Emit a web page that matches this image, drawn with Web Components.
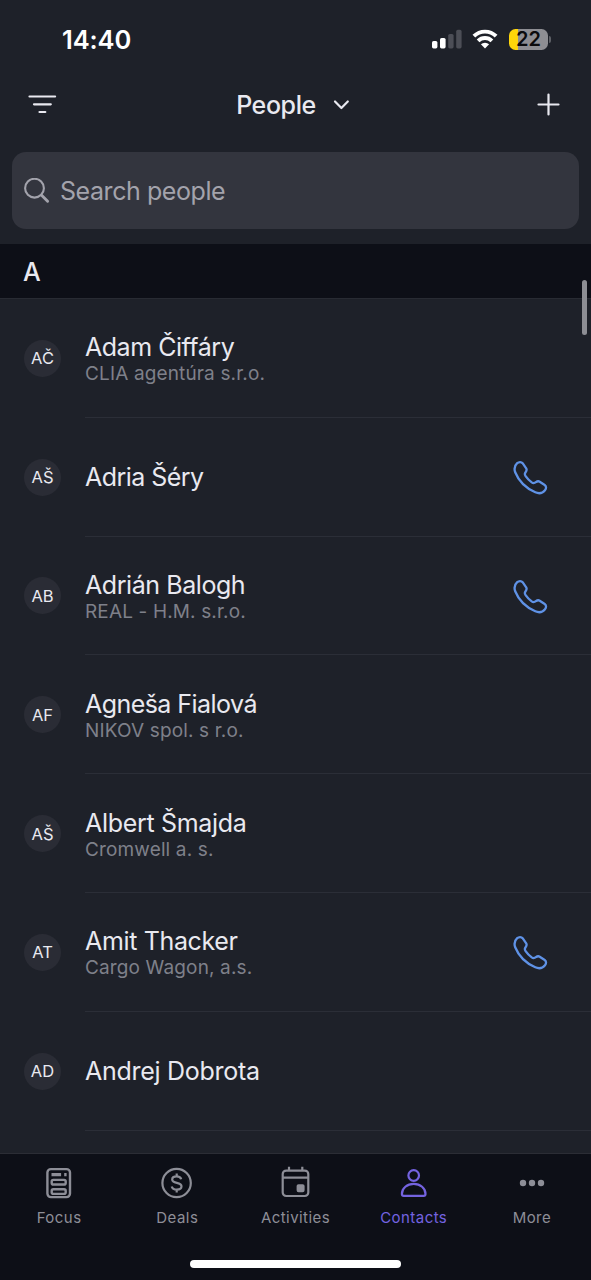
<!DOCTYPE html>
<html lang="en">
<head>
<meta charset="UTF-8">
<meta name="viewport" content="width=device-width, initial-scale=1">
<title>People</title>
<style>
  html, body {
    margin: 0;
    height: 100%;
    overflow: hidden;
    background: #1e2129;
  }

  body {
    font-family: Inter, "Liberation Sans", sans-serif;
    color: #e9e9f0;
  }
</style>
</head>
<body>
<people-screen></people-screen>

<script>
// Base class: opens the shadow root and paints it once connected
class BaseElement extends HTMLElement {
  constructor() {
    super()
    this.attachShadow({ mode: 'open' })
  }

  connectedCallback() {
    this.shadowRoot.innerHTML = this.render()
  }
}

class StatusBar extends BaseElement {
  render() {
    return `
    <style>
      :host {
        display: flex;
        justify-content: space-between;
        align-items: center;
        height: 80px;
        padding: 0 40px 2px 62px;
        box-sizing: border-box;
        color: #fff;
      }
      time { font-size: 25.5px; font-weight: 600; letter-spacing: -0.1px; }
      .icons { display: flex; align-items: center; }
      .wifi { margin: 0 11px 0 10px; }
      .battery {
        display: flex;
        align-items: center;
        justify-content: center;
        width: 39px;
        height: 21px;
        border-radius: 6.5px;
        background: linear-gradient(90deg, #ffd60a 9.5px, #8e8e93 9.5px);
        color: #0b0b0d;
        font-size: 20px;
        font-weight: 600;
      }
      .cap { width: 2px; height: 7px; margin-left: 1px; border-radius: 0 2px 2px 0; background: #5e6066; }
      svg { display: block; }
    </style>
    <time>14:40</time>
    <div class="icons">
      <svg width="30" height="20" viewBox="0 0 30 20">
        <rect x="0" y="12" width="5.4" height="7.4" rx="1.6" fill="#fff"/>
        <rect x="8" y="9" width="5.6" height="10.4" rx="1.6" fill="#fff"/>
        <rect x="16.2" y="5" width="5.4" height="14.4" rx="1.6" fill="#4c4e56"/>
        <rect x="24.2" y="0.8" width="5.4" height="18.6" rx="1.6" fill="#4c4e56"/>
      </svg>
      <svg class="wifi" width="26" height="20" viewBox="0 0 26 20" fill="none" stroke="#fff" stroke-width="3.9">
        <path d="M1.9 7.200a15.700 15.700 0 0 1 22.2 0"/>
        <path d="M6.100 11.800a9.800 9.800 0 0 1 13.800 0"/>
        <path d="M13 19.500l-4.100-4.200a5.900 5.900 0 0 1 8.200 0z" fill="#fff" stroke="none"/>
      </svg>
      <div class="battery">22</div>
      <div class="cap"></div>
    </div>`
  }
}
customElements.define('status-bar', StatusBar)

class NavBar extends BaseElement {
  render() {
    return `
    <style>
      :host {
        display: grid;
        grid-template-columns: 1fr auto 1fr;
        align-items: center;
        height: 50px;
        padding: 0 31px 0 28px;
        box-sizing: border-box;
      }
      h1 {
        display: flex;
        align-items: center;
        gap: 17px;
        margin: 0;
        padding-right: 2px;
        font-size: 25px;
        font-weight: 500;
        line-height: 30px;
        letter-spacing: -0.4px;
      }
      svg { display: block; fill: none; stroke: #e9e9f0; stroke-width: 2.2; stroke-linecap: round; stroke-linejoin: round; }
      .add { justify-self: end; }
    </style>
    <svg width="29" height="20" viewBox="0 0 29 20"><path d="M1.500 1.500h25.600M6 9.300h16.800M11.500 17h5.800"/></svg>
    <h1><slot></slot>
      <svg width="17" height="12" viewBox="0 0 17 12"><path d="M2 2.500l6.400 6.500 6.400-6.500"/></svg>
    </h1>
    <svg class="add" width="23" height="25" viewBox="0 0 23 25"><path d="M11.500 1.500v20M1.500 11.500h20"/></svg>`
  }
}
customElements.define('nav-bar', NavBar)

class SearchField extends BaseElement {
  render() {
    return `
    <style>
      :host {
        display: flex;
        align-items: center;
        gap: 10px;
        height: 77px;
        margin: 22px 12px 15px;
        padding: 0 12px;
        box-sizing: border-box;
        border-radius: 14px;
        background: #33353e;
        color: #a3a3ac;
        font-size: 25px;
        letter-spacing: -0.43px;
      }
      svg { flex: none; fill: none; stroke: #a3a3ac; stroke-linecap: round; }
    </style>
    <svg width="26" height="26" viewBox="0 0 26 26">
      <circle cx="10.5" cy="10.2" r="9.4" stroke-width="2.100"/>
      <path d="M17.600 17.300l6 6" stroke-width="2.900"/>
    </svg>
    <span><slot></slot></span>`
  }
}
customElements.define('search-field', SearchField)

class SectionHeader extends BaseElement {
  render() {
    return `
    <style>
      :host {
        display: flex;
        align-items: center;
        height: 55px;
        padding: 2px 0 0 23px;
        box-sizing: border-box;
        background: #0d0f17;
        border-bottom: 1px solid #282b33;
        font-size: 25px;
        font-weight: 500;
      }
    </style>
    <slot></slot>`
  }
}
customElements.define('section-header', SectionHeader)

class ContactRow extends BaseElement {
  render() {
    const initials = this.getAttribute('initials') ?? ''
    const company = this.getAttribute('company')
    const spacing = this.getAttribute('spacing') ?? '-0.4'
    const phone = this.hasAttribute('phone')

    return `
    <style>
      :host { display: flex; align-items: stretch; height: 118.8px; padding-left: 24px; flex: none; }
      .avatar {
        align-self: center;
        display: flex;
        align-items: center;
        justify-content: center;
        width: 37px;
        height: 37px;
        border-radius: 50%;
        background: #2a2c35;
        font-size: 16.5px;
      }
      .body {
        flex: 1;
        display: flex;
        align-items: center;
        justify-content: space-between;
        margin-left: 24px;
        padding-right: 43px;
        border-bottom: 1px solid #2b2e37;
      }
      .name { font-size: 25px; line-height: 30px; letter-spacing: ${spacing}px; }
      .company { font-size: 19px; line-height: 24px; color: #7e808a; letter-spacing: 0.14px; }
      .name:not(:only-child) { padding-top: 3px; }
      svg { margin-top: 2px; fill: none; stroke: #5f92e6; stroke-width: 2.3; stroke-linejoin: round; }
    </style>
    <div class="avatar">${initials}</div>
    <div class="body">
      <div>
        <div class="name"><slot></slot></div>
        ${company ? `<div class="company">${company}</div>` : ''}
      </div>
      ${phone ? `
      <svg width="35" height="35" viewBox="0 0 35 35">
        <path d="M4.2 3.2C5.8 1.8 8.3 1.500 9.600 3.200L13.200 8.400C14.200 10 13.600 10.900 12.600 12.200C11.400 13.700 11.500 14.600 12.600 16.200C14.200 18.500 16.400 20.700 18.700 22.400C20.300 23.500 21.300 23.400 22.900 22.200C24.200 21.200 25.200 20.800 26.700 21.700L31.700 25C33.500 26.200 33.400 28.500 32 30.200C29.600 33.200 26.200 34 22.300 32.300C12.800 28.200 5.600 20.800 2.200 12.300C0.9 8.600 1.400 5.700 4.200 3.200Z"/>
      </svg>` : ''}
    </div>`
  }
}
customElements.define('contact-row', ContactRow)

const TAB_ICONS = {
  focus: `
    <rect x="5.4" y="3.1" width="22.6" height="28" rx="3.5" stroke-width="2.4"/>
    <path d="M9.500 8.600h9.600M22.200 8.600h2.400" stroke-width="3.2"/>
    <rect x="9.700" y="13.900" width="14" height="4.600" rx="1.6" stroke-width="2.4"/>
    <rect x="9.700" y="23.300" width="14" height="4.600" rx="1.6" stroke-width="2.4"/>`,
  deals: `
    <circle cx="16.6" cy="17" r="14.2"/>
    <path d="M21.200 13.200c-.5-1.800-2.200-2.800-4.600-2.800-2.600 0-4.400 1.100-4.400 3.100 0 4.600 9.300 2.100 9.300 6.800 0 2.100-2 3.300-4.700 3.300-2.600 0-4.500-1.100-5.100-3.100M16.700 7.500v3M16.700 23.500v3"/>`,
  activities: `
    <rect x="3.700" y="4.600" width="25.600" height="25.400" rx="3.5"/>
    <path d="M3.700 11.700h25.600M10 .8v4M23.300 .8v4"/>
    <rect x="18.700" y="19.300" width="5.800" height="5.800" rx=".8" fill="currentColor"/>`,
  contacts: `
    <circle cx="16.700" cy="9.500" r="5.300"/>
    <path d="M4.900 27.900c0-5.700 5.200-10 11.800-10s11.800 4.300 11.800 10c0 1.300-.6 1.900-1.800 1.900h-20c-1.200 0-1.800-.6-1.800-1.900z"/>`,
  more: `
    <g fill="currentColor" stroke="none">
      <circle cx="8" cy="17" r="3.2"/><circle cx="17" cy="17" r="3.2"/><circle cx="26" cy="17" r="3.2"/>
    </g>`
}

class TabItem extends BaseElement {
  render() {
    return `
    <style>
      :host {
        flex: 1;
        display: flex;
        flex-direction: column;
        align-items: center;
        gap: 8px;
        color: #8d8e97;
        font-size: 15px;
        line-height: 20px;
        letter-spacing: 0.45px;
      }
      :host([active]) { color: #7463e0; }
      svg { display: block; fill: none; stroke: currentColor; stroke-width: 2.2; overflow: visible; }
    </style>
    <svg width="34" height="34" viewBox="0 0 34 34">${TAB_ICONS[this.getAttribute('icon')]}</svg>
    <span><slot></slot></span>`
  }
}
customElements.define('tab-item', TabItem)

class TabBar extends BaseElement {
  render() {
    return `
    <style>
      :host {
        display: flex;
        flex-direction: column;
        justify-content: space-between;
        align-items: center;
        height: 127px;
        padding: 12px 0;
        box-sizing: border-box;
        background: #0d0f17;
        border-top: 1px solid #2b2d35;
      }
      nav { display: flex; width: 100%; }
      .home { width: 211px; height: 8px; border-radius: 4px; background: #fff; }
    </style>
    <nav><slot></slot></nav>
    <div class="home"></div>`
  }
}
customElements.define('tab-bar', TabBar)

class PeopleScreen extends BaseElement {
  render() {
    return `
    <style>
      :host { display: flex; flex-direction: column; width: 591px; height: 1280px; overflow: hidden; }
      main { flex: 1; min-height: 0; position: relative; }
      .list { height: 100%; overflow: hidden; }
      /* the scroll thumb floats over the list */
      .thumb {
        position: absolute;
        top: 36px;
        right: 4px;
        width: 5px;
        height: 55px;
        border-radius: 3px;
        background: #8d8e94;
      }
    </style>
    <status-bar></status-bar>
    <nav-bar>People</nav-bar>
    <search-field>Search people</search-field>
    <main>
      <div class="list">
        <section-header>A</section-header>
        <contact-row initials="AČ" company="CLIA agentúra s.r.o." spacing="-0.47">Adam Čiffáry</contact-row>
        <contact-row initials="AŠ" spacing="-0.55" phone>Adria Šéry</contact-row>
        <contact-row initials="AB" company="REAL - H.M. s.r.o." spacing="-0.43" phone>Adrián Balogh</contact-row>
        <contact-row initials="AF" company="NIKOV spol. s r.o." spacing="-0.55">Agneša Fialová</contact-row>
        <contact-row initials="AŠ" company="Cromwell a. s." spacing="-0.32">Albert Šmajda</contact-row>
        <contact-row initials="AT" company="Cargo Wagon, a.s." spacing="-0.35" phone>Amit Thacker</contact-row>
        <contact-row initials="AD" spacing="-0.28">Andrej Dobrota</contact-row>
        <contact-row></contact-row>
      </div>
      <div class="thumb"></div>
    </main>
    <tab-bar>
      <tab-item icon="focus">Focus</tab-item>
      <tab-item icon="deals">Deals</tab-item>
      <tab-item icon="activities">Activities</tab-item>
      <tab-item icon="contacts" active>Contacts</tab-item>
      <tab-item icon="more">More</tab-item>
    </tab-bar>`
  }
}
customElements.define('people-screen', PeopleScreen)
</script>
</body>
</html>
